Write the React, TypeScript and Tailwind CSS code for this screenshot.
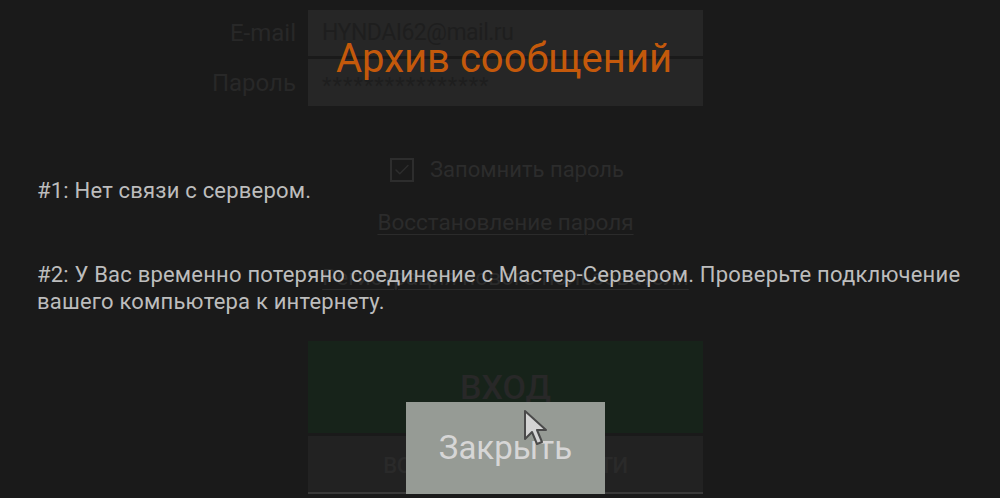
import { Check } from 'lucide-react'

const font = { fontFamily: 'Roboto, "Noto Sans", sans-serif' }

// Форма входа под затемнением
function LoginForm() {
  return (
    <div className="flex flex-col items-start pt-[10px]">
      <div className="grid grid-cols-[296px_395px] gap-x-[12px] gap-y-[3px]">
        <div className="flex items-center justify-end text-[24px] text-[#282828]">E-mail</div>
        <div className="flex h-[46px] items-center bg-[#262626] px-[14px] text-[23px] tracking-[-0.5px] text-[#1e1e1e]">HYNDAI62@mail.ru</div>
        <div className="flex items-center justify-end text-[24px] text-[#282828]">Пароль</div>
        <div className="flex h-[47px] items-center bg-[#262626] px-[14px] pt-[6px] text-[22px] tracking-[1px] text-[#1e1e1e]">****************</div>
      </div>

      <div className="ml-[390px] mt-[47px] flex items-center gap-[16px]">
        <div className="flex h-[24px] w-[24px] items-center justify-center border-2 border-[#2d2d2d]">
          <Check size={18} strokeWidth={2} color="#2d2d2d" />
        </div>
        <span className="text-[22px] text-[#2c2c2c]">Запомнить пароль</span>
      </div>

      <div className="ml-[308px] mt-[20px] flex w-[395px] justify-center">
        <span className="text-[22.5px] text-[#2b2b2b] underline decoration-1 underline-offset-4">Восстановление пароля</span>
      </div>
      <div className="ml-[308px] mt-[21px] flex w-[395px] justify-center">
        <span className="text-[22.5px] text-[#2b2b2b] underline decoration-1 underline-offset-4">Регистрация нового пользователя</span>
      </div>

      <div className="ml-[308px] mt-[46px] flex h-[92px] w-[395px] items-center justify-center bg-[#17231a] pt-[2px] text-[34px] font-medium text-[#282828]">
        ВХОД
      </div>
      <div className="ml-[308px] mt-[3px] flex h-[58px] w-[395px] items-center justify-center border-b-2 border-[#3a3a3a] bg-[#222222] pt-[4px] text-[22px] font-medium tracking-[-0.5px] text-[#2a2a2a]">
        ВОЙТИ ЧЕРЕЗ СОЦСЕТИ
      </div>
    </div>
  )
}

function Cursor() {
  return (
    <svg className="absolute left-[523px] top-[409px]" width="26" height="40" viewBox="0 0 26 40">
      <path d="M2 2 L2 30 L9 23 L14 35 L19 33 L14 21 L23 21 Z" fill="#d4d4d4" stroke="#4a4a4a" strokeWidth="2" strokeLinejoin="round" />
    </svg>
  )
}

export default function App() {
  return (
    <div className="relative h-[498px] w-[1000px] overflow-hidden bg-[#1a1a1a]" style={font}>
      <LoginForm />

      {/* Окно архива сообщений */}
      <div className="absolute inset-0 flex flex-col">
        <h1 className="mt-[29px] pl-[8px] text-center text-[40px] leading-[60px] text-[#c4590b]">Архив сообщений</h1>
        <div className="mt-[88px] px-[37px] text-[22px] leading-[27px] tracking-[0.2px] text-[#bdbdbd]">
          <p>#1: Нет связи с сервером.</p>
          <p className="mt-[57px]">#2: У Вас временно потеряно соединение с Мастер-Сервером. Проверьте подключение вашего компьютера к интернету.</p>
        </div>
        <div className="mt-auto mb-[4px] flex justify-center pl-[11px]">
          <button className="h-[92px] w-[199px] bg-[#969b95] text-[33px] text-[#d6d6d6]">Закрыть</button>
        </div>
      </div>

      <Cursor />
    </div>
  )
}
